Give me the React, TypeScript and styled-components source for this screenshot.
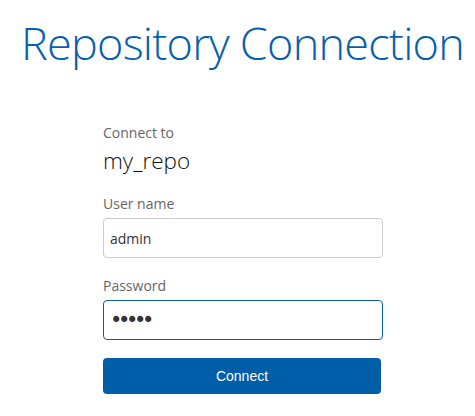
import React from "react";
import styled, { createGlobalStyle } from "styled-components";

const Global = createGlobalStyle`
  html, body { margin: 0; padding: 0; background: #ffffff; }
  body { font-family: "Open Sans", "DejaVu Sans", sans-serif; }
`;

const Page = styled.div`
  width: 475px;
  height: 416px;
  overflow: hidden;
`;

const Title = styled.h1`
  margin: 0;
  padding: 20px 0 0 21px;
  font-family: "Open Sans", sans-serif;
  font-weight: 300;
  font-size: 45px;
  line-height: 45px;
  letter-spacing: -0.75px;
  color: #0760ad;
  white-space: nowrap;
`;

const Form = styled.form`
  margin: 58px 0 0 103px;
  width: 280px;
  display: flex;
  flex-direction: column;
`;

const Label = styled.label<{ $gap?: number }>`
  display: block;
  margin-top: ${(p) => p.$gap ?? 0}px;
  font-size: 14px;
  line-height: 20px;
  color: #666666;
`;

const Value = styled.div`
  margin-top: 3px;
  font-size: 22.5px;
  line-height: 30px;
  font-weight: 300;
  color: #111111;
`;

const Field = styled.input<{ $focused?: boolean; $secret?: boolean }>`
  box-sizing: border-box;
  margin-top: 4px;
  width: 280px;
  height: 40px;
  padding: 0 6px;
  border: 1px solid ${(p) => (p.$focused ? "#0a5ea8" : "#cccccc")};
  border-radius: 4px;
  font-family: ${(p) => (p.$secret ? '"DejaVu Sans", sans-serif' : '"Open Sans", sans-serif')};
  font-size: ${(p) => (p.$secret ? 21 : 14)}px;
  letter-spacing: ${(p) => (p.$secret ? "-4.4px" : "normal")};
  color: #333333;
  background: #ffffff;
  outline: none;
`;

const Button = styled.button`
  box-sizing: border-box;
  margin-top: 18px;
  width: 278px;
  height: 36px;
  border: none;
  border-radius: 4px;
  background: #005ea8;
  color: #ffffff;
  font-family: "Liberation Sans", Arial, sans-serif;
  font-size: 14px;
  cursor: pointer;
`;

export default function App() {
  return (
    <Page>
      <Global />
      <Title>Repository Connection</Title>
      <Form onSubmit={(e) => e.preventDefault()}>
        <Label>Connect to</Label>
        <Value>my_repo</Value>
        <Label $gap={18}>User name</Label>
        <Field type="text" defaultValue="admin" readOnly />
        <Label $gap={18}>Password</Label>
        <Field type="password" defaultValue="admin" readOnly $focused $secret />
        <Button type="submit">Connect</Button>
      </Form>
    </Page>
  );
}
